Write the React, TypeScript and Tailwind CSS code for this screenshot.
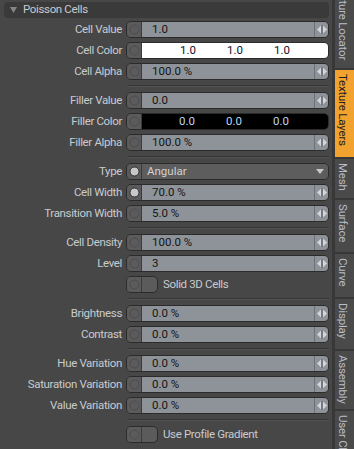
import React from "react";

const FONT = "font-[family-name:Roboto,sans-serif]";

function Circle({ filled }: { filled?: boolean }) {
  return (
    <svg width="11" height="11" viewBox="0 0 11 11">
      <circle
        cx="5.5"
        cy="5.5"
        r="4.5"
        fill={filled ? "#c8c8c8" : "none"}
        stroke={filled ? "#2e2e2e" : "#4c4c4c"}
        strokeWidth="1"
      />
    </svg>
  );
}

function Arrows() {
  return (
    <svg width="10" height="9" viewBox="0 0 10 9">
      <polygon points="0,4.5 4,0.5 4,8.5" fill="#d2d6da" />
      <rect x="4.5" y="0" width="1" height="9" fill="#5c6166" />
      <polygon points="10,4.5 6,0.5 6,8.5" fill="#d2d6da" />
    </svg>
  );
}

function Btn({ filled }: { filled?: boolean }) {
  return (
    <div className="flex w-[15px] shrink-0 items-center justify-center border-r border-[#3a3a3a] bg-[#5b5b5b]">
      <Circle filled={filled} />
    </div>
  );
}

function Label({ children }: { children: React.ReactNode }) {
  return (
    <div className="w-[122px] shrink-0 whitespace-nowrap text-right text-[11.5px] tracking-[-0.35px] text-[#c8cbcf]">
      {children}
    </div>
  );
}

function ValueRow({
  label,
  value,
  filled,
}: {
  label: string;
  value: string;
  filled?: boolean;
}) {
  return (
    <div className="flex h-[21px] items-center">
      <Label>{label}</Label>
      <div className="ml-[4px] flex h-[17px] w-[203px] overflow-hidden rounded-[5px] border border-[#2b2b2b]">
        <Btn filled={filled} />
        <div className="flex flex-1 items-center bg-[#8e9399] pl-[10px] text-[11.5px] leading-[15px] text-[#141414]">
          {value}
        </div>
        <div className="flex w-[14px] shrink-0 items-center justify-center border-l border-[#6c7176] bg-[#8e9399]">
          <Arrows />
        </div>
      </div>
    </div>
  );
}

function ColorRow({
  label,
  values,
  dark,
}: {
  label: string;
  values: string[];
  dark?: boolean;
}) {
  return (
    <div className="flex h-[21px] items-center">
      <Label>{label}</Label>
      <div className="ml-[4px] flex h-[17px] w-[203px] overflow-hidden rounded-[5px] border border-[#2b2b2b]">
        <Btn />
        <div
          className={
            dark
              ? "flex flex-1 items-center bg-black pl-[37px] text-[11.5px] leading-[15px] text-[#bcd6f0]"
              : "flex flex-1 items-center bg-white pl-[38px] text-[11.5px] leading-[15px] text-[#10102a]"
          }
        >
          {values.map((v, i) => (
            <span key={i} className="w-[47px]">
              {v}
            </span>
          ))}
        </div>
      </div>
    </div>
  );
}

function TypeRow() {
  return (
    <div className="flex h-[21px] items-center">
      <Label>Type</Label>
      <div className="ml-[4px] flex h-[17px] w-[203px] overflow-hidden rounded-[5px] border border-[#2b2b2b]">
        <Btn filled />
        <div className="flex flex-1 items-center justify-between bg-[#5d5d5d] pl-[5px] pr-[4px] text-[11.5px] leading-[15px] text-[#d2d2d2]">
          <span>Angular</span>
          <svg width="8" height="5" viewBox="0 0 8 5">
            <polygon points="0,0 8,0 4,5" fill="#c8c8c8" />
          </svg>
        </div>
      </div>
    </div>
  );
}

function ToggleRow({ label }: { label: string }) {
  return (
    <div className="flex h-[21px] items-center">
      <div className="w-[122px] shrink-0" />
      <div className="ml-[4px] flex h-[17px] w-[32px] overflow-hidden rounded-[5px] border border-[#2b2b2b] bg-[#5b5b5b]">
        <Btn />
        <div className="flex-1" />
      </div>
      <span className="ml-[5px] whitespace-nowrap text-[11.5px] tracking-[-0.35px] text-[#c8cbcf]">
        {label}
      </span>
    </div>
  );
}

function Sep() {
  return (
    <div className="flex h-[8px] items-center">
      <div className="ml-[128px] h-[2px] w-[201px] border-t border-b border-t-[#363636] border-b-[#525252]" />
    </div>
  );
}

function Tab({
  label,
  h,
  active,
  first,
}: {
  label: string;
  h: string;
  active?: boolean;
  first?: boolean;
}) {
  return (
    <div
      className={
        (active ? "bg-[#f2a22e] text-[#1c1c1c] " : "bg-[#4a4a4a] text-[#b9bdc6] ") +
        (first ? "justify-end pb-[8px] " : "pt-[4px] ") +
        "mb-[2px] flex shrink-0 flex-col overflow-hidden pl-[1px] " +
        h
      }
    >
      <div className="flex">
        <div className="whitespace-nowrap text-[11.5px] leading-[13px] tracking-[-0.2px] [writing-mode:vertical-rl]">
          {label}
        </div>
      </div>
    </div>
  );
}

export default function App() {
  return (
    <div className={"flex h-[449px] w-[354px] overflow-hidden bg-[#474747] " + FONT}>
      <div className="w-[332px] shrink-0">
        <div className="px-[4px] pt-[2px]">
          <div className="flex h-[16px] w-[325px] items-center rounded-[4px] bg-[#3a3a3a]">
            <svg width="7" height="6" viewBox="0 0 7 6" className="ml-[6px]">
              <polygon points="0,0 7,0 3.5,6" fill="#858585" />
            </svg>
            <span className="ml-[6px] text-[11.5px] tracking-[-0.35px] text-[#c8cacd]">
              Poisson Cells
            </span>
          </div>
        </div>
        <div className="mt-[1px]">
          <ValueRow label="Cell Value" value="1.0" />
          <ColorRow label="Cell Color" values={["1.0", "1.0", "1.0"]} />
          <ValueRow label="Cell Alpha" value="100.0 %" />
          <Sep />
          <ValueRow label="Filler Value" value="0.0" />
          <ColorRow label="Filler Color" values={["0.0", "0.0", "0.0"]} dark />
          <ValueRow label="Filler Alpha" value="100.0 %" />
          <Sep />
          <TypeRow />
          <ValueRow label="Cell Width" value="70.0 %" filled />
          <ValueRow label="Transition Width" value="5.0 %" />
          <Sep />
          <ValueRow label="Cell Density" value="100.0 %" />
          <ValueRow label="Level" value="3" />
          <ToggleRow label="Solid 3D Cells" />
          <Sep />
          <ValueRow label="Brightness" value="0.0 %" />
          <ValueRow label="Contrast" value="0.0 %" />
          <Sep />
          <ValueRow label="Hue Variation" value="0.0 %" />
          <ValueRow label="Saturation Variation" value="0.0 %" />
          <ValueRow label="Value Variation" value="0.0 %" />
          <Sep />
          <ToggleRow label="Use Profile Gradient" />
        </div>
      </div>
      <div className="flex h-[449px] w-[22px] flex-col overflow-hidden bg-[#383838] pl-[3px]">
        <Tab label="Texture Locator" h="h-[68px]" first />
        <Tab label="Texture Layers" h="h-[87px]" active />
        <Tab label="Mesh" h="h-[39px]" />
        <Tab label="Surface" h="h-[52px]" />
        <Tab label="Curve" h="h-[43px]" />
        <Tab label="Display" h="h-[50px]" />
        <Tab label="Assembly" h="h-[58px]" />
        <Tab label="User Channels" h="h-[60px]" />
      </div>
    </div>
  );
}
